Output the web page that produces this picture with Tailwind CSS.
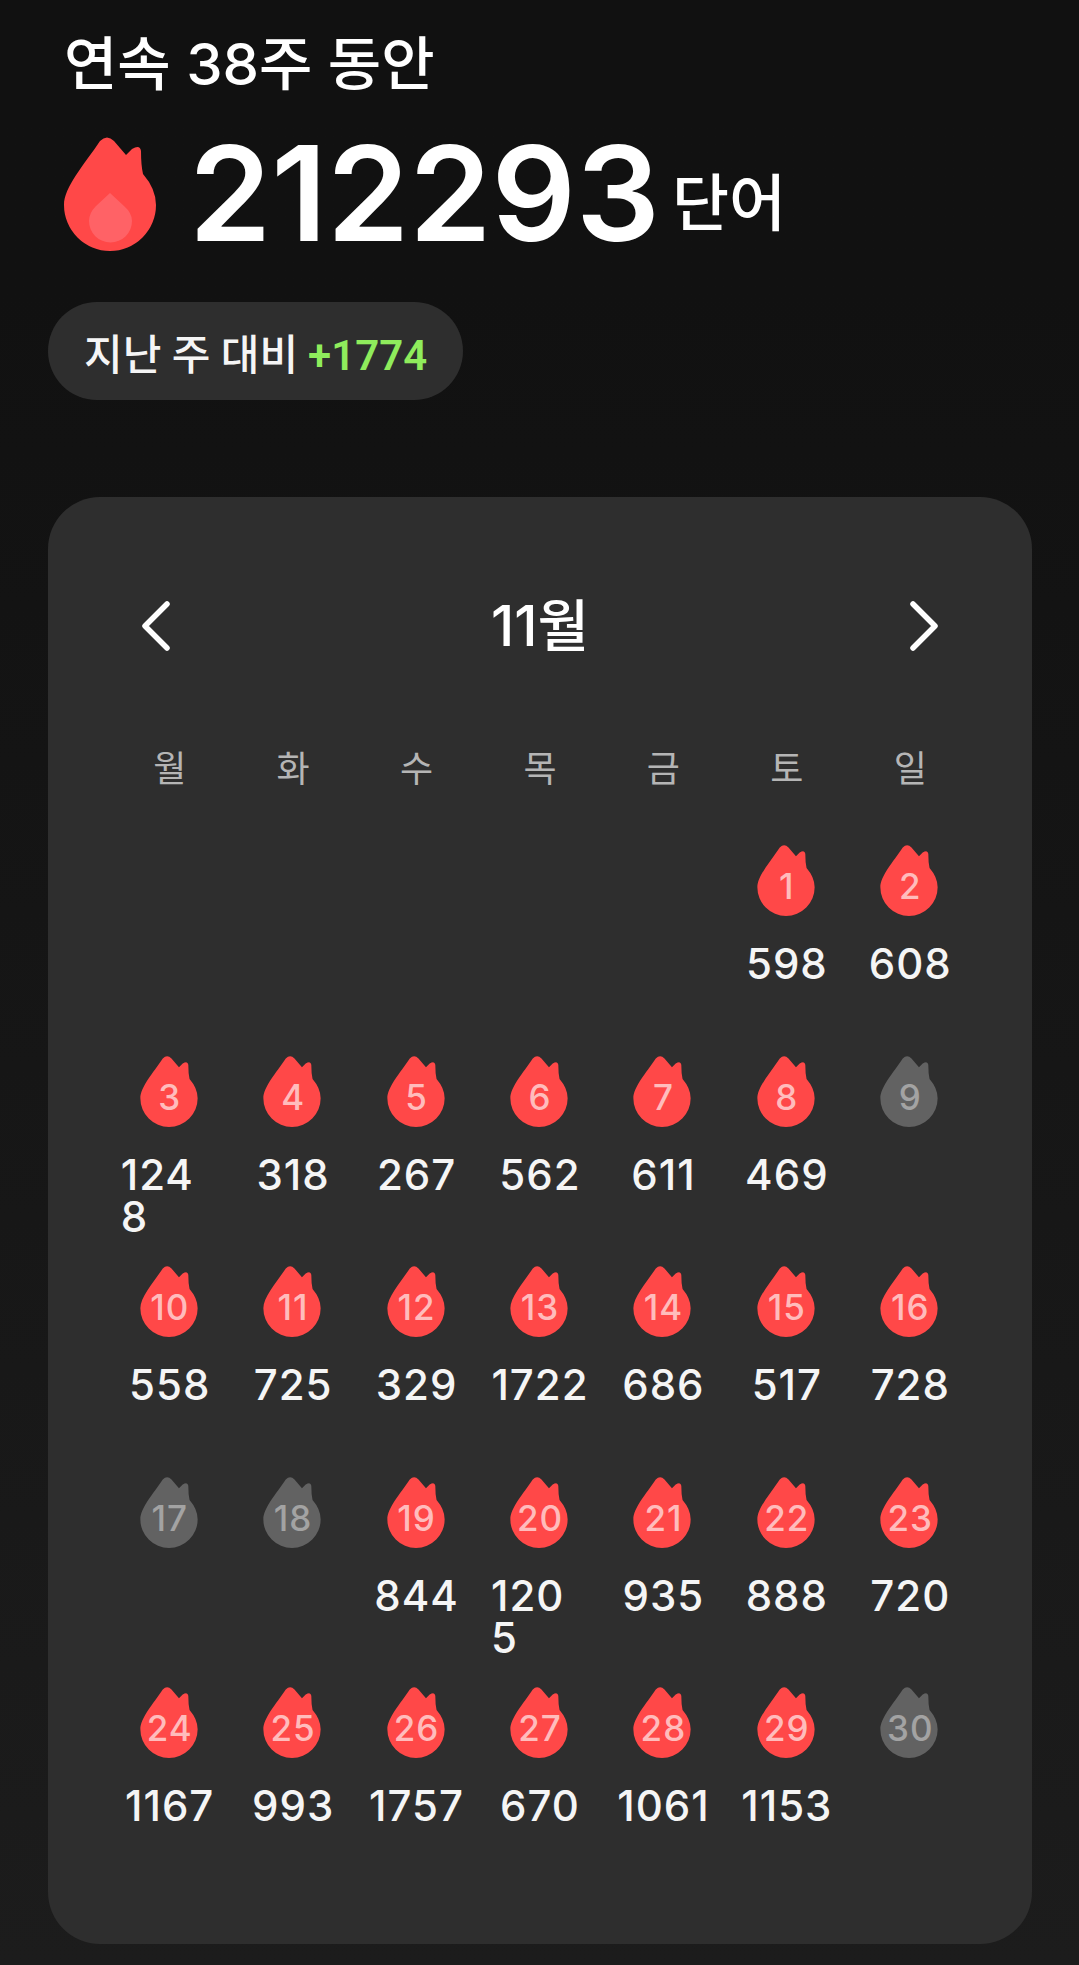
<!DOCTYPE html>
<html lang="ko">
<head>
  <meta charset="UTF-8" />
  <meta name="viewport" content="width=device-width, initial-scale=1.0"/>
  <title>Streak</title>
  <script src="https://cdn.jsdelivr.net/npm/@tailwindcss/browser@4"></script>
</head>
<body class="bg-[#111111] text-white font-['Inter','Noto_Sans_CJK_KR',sans-serif]">
  <div class="w-[1079px] h-[1965px] overflow-hidden px-12 bg-linear-to-b from-[#111111] from-15% to-[#1c1c1c]">
    <div class="pt-[24px] pl-4 text-[58px] leading-[80px] font-medium">연속 38주 동안</div>
    <div class="mt-[29px] pl-4 flex items-end h-[120px]">
      <svg class="w-[92px] h-[114px] shrink-0 mb-[2px]" viewBox="0 0 92 114">
        <path fill="#FF4848" d="M36 4Q43 -3 50 4L62 18L68 12Q76 7 77 14Q77 28 79 37Q92 52 92 68A46 46 0 0 1 0 68C0 50 20 28 36 4Z"/>
        <path fill="#FF6266" d="M46 56L60 69Q68 76 68 84A21.500 21.500 0 0 1 25 84Q25 76 32 69Z"/>
      </svg>
      <span class="ml-[33px] text-[132px] leading-[120px] font-semibold">212293</span>
      <span class="ml-[12px] mb-[4px] text-[62px] leading-[90px] font-medium">단어</span>
    </div>
    <div class="mt-[49px] w-[415px] h-[98px] pt-[8px] rounded-full bg-[#2e2e2e] flex items-center pl-[36px] text-[42px] font-['Roboto','Noto_Sans_CJK_KR',sans-serif]">
      <span class="font-medium text-[#f5f5f5]">지난 주 대비</span><span class="ml-[10px] font-semibold text-[#8fec5c]">+1774</span>
    </div>
    <div class="mt-[97px] w-[984px] h-[1447px] rounded-[52px] bg-[#2e2e2e] px-[60px]">
      <div class="pt-[90px] px-[34px] h-[244px] flex items-start justify-between">
        <svg class="w-[28px] h-[50px] mt-[14px]" viewBox="0 0 28 50" fill="none" stroke="white" stroke-width="5.500" stroke-linecap="round" stroke-linejoin="round"><path d="M25 3L3 25L25 47"/></svg>
        <div class="text-[56px] leading-[78px] font-medium">11월</div>
        <svg class="w-[28px] h-[50px] mt-[14px]" viewBox="0 0 28 50" fill="none" stroke="white" stroke-width="5.500" stroke-linecap="round" stroke-linejoin="round"><path d="M3 3L25 25L3 47"/></svg>
      </div>
      <div id="days" class="grid grid-cols-7 text-center text-[36px] leading-[56px] text-[#b5b5b5]">
        <div>월</div><div>화</div><div>수</div><div>목</div><div>금</div><div>토</div><div>일</div>
      </div>
      <div id="cal" class="mt-[48px] grid grid-cols-7 auto-rows-[210.600px]"></div>
    </div>
  </div>
  <script>
    // [day, words]; words 0 means a missed day
    const days = [[1,598],[2,608],[3,1248],[4,318],[5,267],[6,562],[7,611],[8,469],[9,0],[10,558],[11,725],[12,329],[13,1722],[14,686],[15,517],[16,728],[17,0],[18,0],[19,844],[20,1205],[21,935],[22,888],[23,720],[24,1167],[25,993],[26,1757],[27,670],[28,1061],[29,1153],[30,0]];
    const flame = "M36 4Q43 -3 50 4L62 18L68 12Q76 7 77 14Q77 28 79 37Q92 52 92 68A46 46 0 0 1 0 68C0 50 20 28 36 4Z";
    let html = "<div></div><div></div><div></div><div></div><div></div>";
    for (const [d, w] of days) {
      const on = w > 0;
      html += `<div class="flex flex-col items-center">
        <div class="relative ml-[-2px] w-[58px] h-[71px] shrink-0">
          <svg class="w-[58px] h-[71px]" viewBox="0 0 92 114"><path fill="${on ? "#FF4848" : "#626262"}" d="${flame}"/></svg>
          <div class="absolute left-[-9px] right-[-11px] top-[21px] text-center text-[35px] leading-[40px] tracking-[1px] font-medium ${on ? "text-[#ffbcbc]" : "text-[#a3a3a3]"}">${d}</div>
        </div>
        <div class="mt-[27px] max-w-[98px] break-all text-left text-[42px] leading-[42px] tracking-[1px] font-medium text-[#f5f5f5]">${on ? w : ""}</div>
      </div>`;
    }
    document.getElementById("cal").innerHTML = html;
  </script>
</body>
</html>
